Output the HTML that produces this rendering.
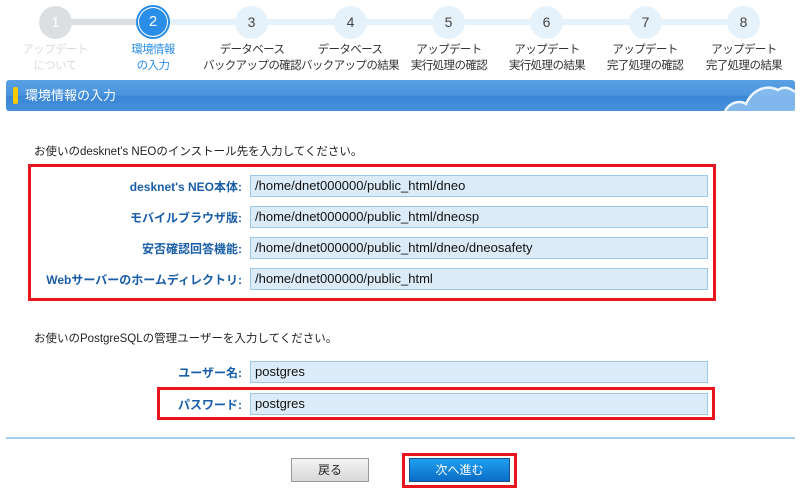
<!DOCTYPE html>
<html><head><meta charset="utf-8"><style>
*{margin:0;padding:0;box-sizing:border-box}
body{width:800px;height:494px;background:#fff;position:relative;overflow:hidden;font-family:"Liberation Sans","Noto Sans CJK JP",sans-serif;color:#333}
.a{position:absolute}
.line{position:absolute;top:19px;height:6px}
.c{position:absolute;top:6px;width:33px;height:33px;border-radius:50%;background:#e6f2fb;text-align:center;line-height:33px;font-size:14px;color:#444}
.lb{position:absolute;top:42px;width:110px;text-align:center;font-size:11.5px;line-height:16px;color:#333;white-space:nowrap;letter-spacing:-0.6px}
.red{position:absolute;border:3px solid #e8141e}
.l{position:absolute;width:220px;text-align:right;font-size:12px;font-weight:bold;color:#1a5ea8;left:22px;white-space:nowrap}
.in{position:absolute;left:250px;width:458px;height:22px;background:#dcebf8;border:1px solid #9cc8ea;font-size:13px;line-height:20px;padding-left:4px;color:#111}
.t{position:absolute;left:34px;font-size:11.5px;color:#222}
</style></head><body>
<div class="line" style="left:55px;width:98px;background:#dcdfe1"></div>
<div class="line" style="left:153px;width:591px;background:#e6f2fb"></div>
<div class="c" style="left:39px;background:#dcdfe1;color:#fff">1</div>
<div class="c" style="left:136px;width:34px;height:34px;top:5px;background:#2a8de8;color:#fff;box-shadow:inset 0 0 0 2px #2a8de8,inset 0 0 0 3px #fff;font-size:15px">2</div>
<div class="c" style="left:235px">3</div>
<div class="c" style="left:334px">4</div>
<div class="c" style="left:432px">5</div>
<div class="c" style="left:530px">6</div>
<div class="c" style="left:629px">7</div>
<div class="c" style="left:727px">8</div>
<div class="lb" style="left:0px;color:#d8dadc">アップデート<br>について</div>
<div class="lb" style="left:98px;color:#2a8de8">環境情報<br>の入力</div>
<div class="lb" style="left:197px">データベース<br>バックアップの確認</div>
<div class="lb" style="left:295px">データベース<br>バックアップの結果</div>
<div class="lb" style="left:394px">アップデート<br>実行処理の確認</div>
<div class="lb" style="left:492px">アップデート<br>実行処理の結果</div>
<div class="lb" style="left:590px">アップデート<br>完了処理の確認</div>
<div class="lb" style="left:689px">アップデート<br>完了処理の結果</div>
<div class="a" style="left:6px;top:80px;width:789px;height:31px;border-radius:3px;background:linear-gradient(180deg,#5aa0e3 0%,#4a94de 50%,#3a86d6 51%,#4690da 100%)"></div>
<svg class="a" style="left:700px;top:80px" width="95" height="31"><path d="M25 31 C30 22 40 20 46 24 C52 10 66 4 78 10 C84 6 90 8 95 12 L95 31Z" fill="#9cc9f4" opacity=".7"/><path d="M25 31 C30 22 40 20 46 24 C52 10 66 4 78 10 C84 6 90 8 95 12" fill="none" stroke="#eef7ff" stroke-width="2.5"/></svg>
<div class="a" style="left:13px;top:87px;width:5px;height:17px;background:#f8c800;border-radius:2px"></div>
<div class="a" style="left:25px;top:87px;font-size:13px;color:#fff;line-height:18px">環境情報の入力</div>
<div class="t" style="top:143px">お使いのdesknet's NEOのインストール先を入力してください。</div>
<div class="red" style="left:28px;top:164px;width:688px;height:137px"></div>
<div class="l" style="top:178px">desknet's NEO本体:</div>
<div class="in" style="top:175px">/home/dnet000000/public_html/dneo</div>
<div class="l" style="top:209px">モバイルブラウザ版:</div>
<div class="in" style="top:206px">/home/dnet000000/public_html/dneosp</div>
<div class="l" style="top:240px">安否確認回答機能:</div>
<div class="in" style="top:237px">/home/dnet000000/public_html/dneo/dneosafety</div>
<div class="l" style="top:271px">Webサーバーのホームディレクトリ:</div>
<div class="in" style="top:268px">/home/dnet000000/public_html</div>
<div class="t" style="top:330px">お使いのPostgreSQLの管理ユーザーを入力してください。</div>
<div class="l" style="top:364px">ユーザー名:</div>
<div class="in" style="top:361px">postgres</div>
<div class="red" style="left:157px;top:387px;width:558px;height:33px"></div>
<div class="l" style="top:396px">パスワード:</div>
<div class="in" style="top:393px">postgres</div>
<div class="a" style="left:6px;top:437px;width:789px;height:2px;background:#a8cdee"></div>
<div class="a" style="left:291px;top:458px;width:78px;height:24px;border:1px solid #999;background:linear-gradient(#f4f4f4,#d8d8d8);text-align:center;font-size:12px;line-height:22px;color:#222">戻る</div>
<div class="red" style="left:402px;top:453px;width:115px;height:35px"></div>
<div class="a" style="left:409px;top:458px;width:101px;height:24px;border:1px solid #1d4f8a;background:linear-gradient(#1fa0f0,#0a6cc6);text-align:center;font-size:12px;line-height:22px;color:#fff">次へ進む</div>
</body></html>
